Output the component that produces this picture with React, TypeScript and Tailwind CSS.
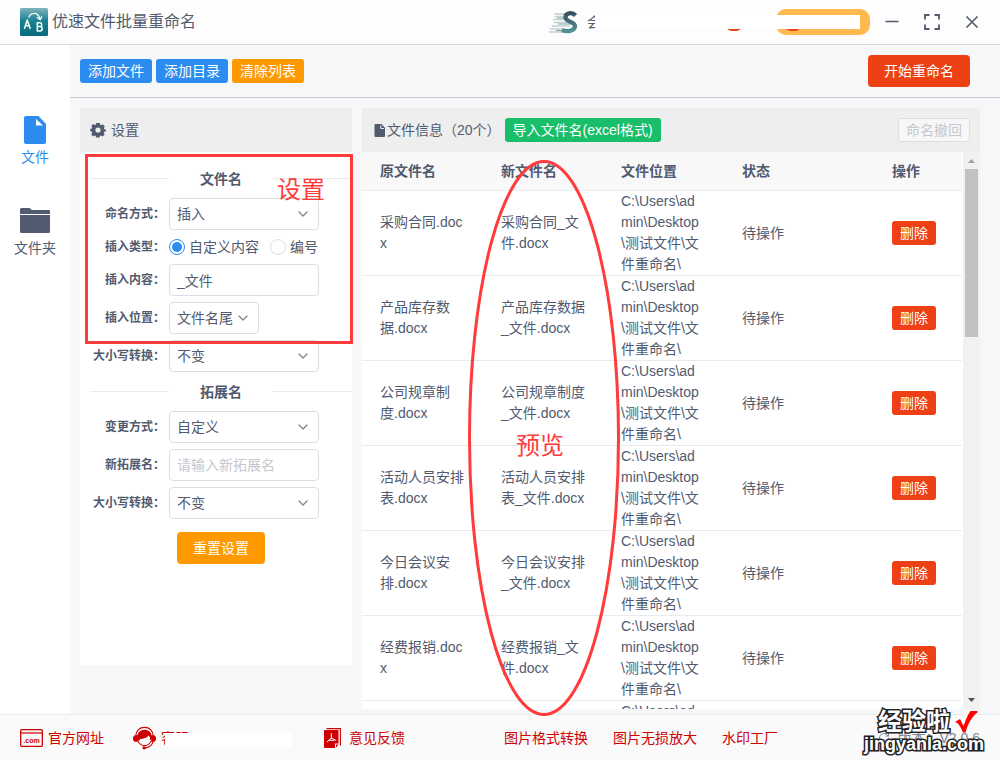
import { ReactNode } from 'react';
import { ChevronDown, RotateCw } from 'lucide-react';

const files = [
  { id: 1, name: '采购合同.docx', renamed: '采购合同_文件.docx', status: '待操作' },
  { id: 2, name: '产品库存数据.docx', renamed: '产品库存数据_文件.docx', status: '待操作' },
  { id: 3, name: '公司规章制度.docx', renamed: '公司规章制度_文件.docx', status: '待操作' },
  { id: 4, name: '活动人员安排表.docx', renamed: '活动人员安排表_文件.docx', status: '待操作' },
  { id: 5, name: '今日会议安排.docx', renamed: '今日会议安排_文件.docx', status: '待操作' },
  { id: 6, name: '经费报销.docx', renamed: '经费报销_文件.docx', status: '待操作' },
  { id: 7, name: '', renamed: '', status: '' },
];

const folder = 'C:\\Users\\admin\\Desktop\\测试文件\\文件重命名\\';

function AppLogo() {
  return (
    <svg className="h-7 w-7" viewBox="0 0 28 28" fill="none" stroke="#fff" strokeLinecap="round" strokeLinejoin="round">
      <defs>
        <linearGradient id="logo" x1="0" y1="0" x2="0" y2="1">
          <stop offset="0" stopColor="#7fb3bd" />
          <stop offset="0.45" stopColor="#1a8292" />
          <stop offset="1" stopColor="#086a7c" />
        </linearGradient>
      </defs>
      <rect width="28" height="28" rx="1.5" fill="url(#logo)" stroke="none" />
      <path d="M4.500 20.300 7.300 12l2.800 8.300M5.400 17.700h3.800" strokeWidth="1.500" />
      <path d="M17.300 14.700v8.300h2.700a2.200 2.200 0 0 0 0-4.400h-2.700M17.300 14.700h2.500a1.900 1.900 0 0 1 0 3.900" strokeWidth="1.500" />
      <path d="M9 9C10 6.500 11.800 5.300 14 5.300c3 0 5 2 5.800 5.200" strokeWidth="1.300" />
      <path d="M17.300 9.800 20.200 11.800 21.600 8.800" strokeWidth="1.300" />
    </svg>
  );
}

function SpeedLogo() {
  return (
    <svg className="h-6 w-[30px]" viewBox="0 0 30 24" fill="none">
      <defs>
        <linearGradient id="speed" x1="0" y1="0" x2="0" y2="1">
          <stop offset="0" stopColor="#35505f" />
          <stop offset="1" stopColor="#529398" />
        </linearGradient>
      </defs>
      <path d="M5 4h13M6 6.500h9M4 9.500h11M5 12.500h13M3 16h18M1 19h13M0 22h18" stroke="#c2cfd1" strokeWidth="1.400" />
      <path d="M8 8h7M9 14h12M7 20.500h9" stroke="#7fa5aa" strokeWidth="1" />
      <path d="M26.500 5.500C23.500 2 16.500 2.500 16.500 7.300 16.500 12.500 26.500 11.500 26 16.300 25.500 21.500 17.500 22 13 20" stroke="url(#speed)" strokeWidth="4.300" />
    </svg>
  );
}

function GearIcon() {
  return (
    <svg className="h-4 w-4" viewBox="0 0 16 16" fill="#515a6e">
      <path
        fillRule="evenodd"
        d="M6.200 1h3.600l.3 1.800 1.100.5 1.600-1 2 2.200-1 1.600.4 1 1.600.3v2l-1.600.4-.5 1.100 1 1.600-2.100 2-1.600-1-1.100.5-.3 1.500H6.200l-.4-1.600-1-.4-1.600 1-2-2.100 1-1.600-.5-1.100L.2 9V7l1.600-.4.4-1-1-1.600 2-2 1.600 1 1.100-.4zM8 5.400a2.600 2.600 0 1 0 0 5.200 2.600 2.600 0 0 0 0-5.200z"
      />
    </svg>
  );
}

function SectionTitle({ children }: { children: ReactNode }) {
  return (
    <div className="flex h-[27px] items-center">
      <span className="h-px flex-1 bg-[#e8eaec]" />
      <h3 className="px-[31px] text-sm font-bold">{children}</h3>
      <span className="h-px flex-1 bg-[#e8eaec]" />
    </div>
  );
}

function Field({ id, label, children }: { id: string; label: string; children: ReactNode }) {
  return (
    <div className="flex items-center">
      <label htmlFor={id} className="w-[79px] shrink-0 pr-1 text-right text-xs font-bold whitespace-nowrap">
        {label}：
      </label>
      {children}
    </div>
  );
}

function Select({ id, value, short = false }: { id: string; value: string; short?: boolean }) {
  return (
    <div className={`relative ${short ? 'w-[90px]' : 'w-[150px]'}`}>
      <select id={id} className="block h-8 w-full appearance-none rounded border border-[#dcdee2] bg-white pl-[7px] text-sm">
        <option>{value}</option>
      </select>
      <ChevronDown className="pointer-events-none absolute top-2 right-2 h-4 w-4 text-[#808695]" />
    </div>
  );
}

function Radio({ id, label, checked = false }: { id: string; label: string; checked?: boolean }) {
  return (
    <label className="flex items-center gap-1 text-sm whitespace-nowrap">
      <input
        id={id}
        type="radio"
        name="insertType"
        defaultChecked={checked}
        className="grid h-4 w-4 appearance-none place-items-center rounded-full border border-[#dcdee2] bg-white checked:border-[#2d8cf0] checked:before:h-[10px] checked:before:w-[10px] checked:before:rounded-full checked:before:bg-[#2d8cf0] checked:before:content-['']"
      />
      {label}
    </label>
  );
}

function Header() {
  return (
    <header className="flex h-[45px] shrink-0 items-center border-b border-[#dcdcdc] bg-[#fdfdfd] pr-[21px] pl-5">
      <AppLogo />
      <h1 className="ml-1 text-base">优速文件批量重命名</h1>
      <div className="ml-auto flex h-full items-center">
        <SpeedLogo />
        <div className="relative ml-2 flex h-full w-[283px] items-center">
          <span className="text-sm">会</span>
          <span className="mt-[2px] ml-auto h-4 w-4 rounded-md bg-[#ed4014]" />
          <button aria-label="会员" className="ml-[34px] flex h-[26px] w-[94px] items-center rounded-[10px] bg-[#ffb94f] pl-[9px]">
            <span className="mt-[2px] h-4 w-4 rounded-md bg-[#ed4014]" />
          </button>
          <span className="absolute top-[15px] right-[10px] left-2 h-[14px] bg-white" />
        </div>
        <div className="ml-[15px] flex items-center gap-[25px]">
          <button aria-label="最小化">
            <svg className="h-4 w-[14px]" viewBox="0 0 14 16" stroke="#515a6e" strokeWidth="1.500">
              <path d="M.5 7.500h13" />
            </svg>
          </button>
          <button aria-label="最大化">
            <svg className="h-4 w-4" viewBox="0 0 16 16" fill="none" stroke="#515a6e" strokeWidth="1.800">
              <path d="M1 5.500V1h4.500M10.500 1H15v4.500M15 10.500V15h-4.500M5.500 15H1v-4.500" />
            </svg>
          </button>
          <button aria-label="关闭">
            <svg className="h-4 w-[14px]" viewBox="0 0 14 16" stroke="#515a6e" strokeWidth="1.600">
              <path d="M1.500 2.500l11 11M12.500 2.500l-11 11" />
            </svg>
          </button>
        </div>
      </div>
    </header>
  );
}

function Sidebar() {
  return (
    <nav className="flex w-[70px] shrink-0 flex-col items-center gap-10 bg-white pt-[71px] text-sm">
      <a href="#files" className="flex flex-col items-center gap-[3px] text-[#2d8cf0]">
        <svg className="h-7 w-[22px]" viewBox="0 0 22 28">
          <path d="M2 0h12.500L22 8v18a2 2 0 0 1-2 2H2a2 2 0 0 1-2-2V2a2 2 0 0 1 2-2z" fill="#2d8cf0" />
          <path d="M12 3v6.500h7z" fill="#fff" />
        </svg>
        文件
      </a>
      <a href="#folders" className="flex flex-col items-center gap-[3px]">
        <svg className="h-7 w-[30px]" viewBox="0 0 30 28" fill="#515a6e">
          <path d="M0 7V2.500A1.500 1.500 0 0 1 1.500 1h8L12 3h17a1 1 0 0 1 1 1v3zM0 8h30v16.500a1.500 1.500 0 0 1-1.500 1.500h-27A1.500 1.500 0 0 1 0 24.500z" />
        </svg>
        文件夹
      </a>
    </nav>
  );
}

function SettingsPanel() {
  return (
    <section className="relative w-[272px] shrink-0 self-start bg-white">
      <h2 className="flex h-11 items-center gap-[5px] bg-[#eee] pl-[10px] text-sm">
        <GearIcon />
        设置
      </h2>
      <form className="flex flex-col gap-[6px] pt-[13px] pb-[101px] pl-[10px]">
        <SectionTitle>文件名</SectionTitle>
        <Field id="mode" label="命名方式">
          <Select id="mode" value="插入" />
        </Field>
        <Field id="custom" label="插入类型">
          <div className="flex h-[22px] items-center gap-[11px]">
            <Radio id="custom" label="自定义内容" checked />
            <Radio id="serial" label="编号" />
          </div>
        </Field>
        <Field id="content" label="插入内容">
          <input id="content" defaultValue="_文件" className="h-8 w-[150px] rounded border border-[#dcdee2] px-[7px] text-sm" />
        </Field>
        <Field id="position" label="插入位置">
          <Select id="position" value="文件名尾" short />
        </Field>
        <Field id="nameCase" label="大小写转换">
          <Select id="nameCase" value="不变" />
        </Field>
        <SectionTitle>拓展名</SectionTitle>
        <Field id="extMode" label="变更方式">
          <Select id="extMode" value="自定义" />
        </Field>
        <Field id="ext" label="新拓展名">
          <input
            id="ext"
            placeholder="请输入新拓展名"
            className="h-8 w-[150px] rounded border border-[#dcdee2] px-[7px] text-sm placeholder:text-[#c5c8ce]"
          />
        </Field>
        <Field id="extCase" label="大小写转换">
          <Select id="extCase" value="不变" />
        </Field>
        <button type="button" className="mt-[7px] h-8 self-center rounded bg-[#ff9900] px-4 text-sm text-white">
          重置设置
        </button>
      </form>

      {/* Callout around the file name settings */}
      <div className="pointer-events-none absolute top-[46px] -right-px left-[5px] h-[190px] border-3 border-[#ff3b3b]">
        <span className="absolute top-[17px] right-[25px] text-2xl text-[#ff3b3b]">设置</span>
      </div>
    </section>
  );
}

function FilesPanel() {
  return (
    <section className="relative flex min-w-0 flex-1 flex-col bg-white">
      <div className="flex h-11 shrink-0 items-center bg-[#eee] pr-[10px] pl-3 text-sm">
        <svg className="mr-px h-[13px] w-3" viewBox="0 0 12 13">
          <path d="M1.500 0h6L11 3.800V12a1 1 0 0 1-1 1H1.500a1 1 0 0 1-1-1V1a1 1 0 0 1 1-1z" fill="#515a6e" />
          <path d="M6.800 1.200v3.300h3.200" fill="none" stroke="#eee" strokeWidth="1" />
        </svg>
        <h2>文件信息（20个）</h2>
        <button className="ml-1 h-6 rounded-[3px] bg-[#19be6b] px-2 whitespace-nowrap text-white">导入文件名(excel格式)</button>
        <button disabled className="ml-auto h-6 rounded-[3px] border border-[#dcdee2] bg-[#f7f7f7] px-[7px] text-[#c5c8ce]">
          命名撤回
        </button>
      </div>
      <div className="flex min-h-0 flex-1">
        <div className="min-w-0 flex-1 overflow-hidden pr-px">
          <table className="w-full table-fixed border-separate border-spacing-0 text-left text-sm leading-[21px]">
            <colgroup>
              <col className="w-[121px]" />
              <col className="w-[120px]" />
              <col className="w-[121px]" />
              <col className="w-[150px]" />
              <col />
            </colgroup>
            <thead>
              <tr className="h-[39px] bg-[#f8f8f9]">
                {['原文件名', '新文件名', '文件位置', '状态', '操作'].map(title => (
                  <th key={title} className="border-b border-[#e8eaec] px-[18px] py-0 font-bold">
                    {title}
                  </th>
                ))}
              </tr>
            </thead>
            <tbody>
              {files.map(file => (
                <tr key={file.id}>
                  <td className="border-b border-[#e8eaec] px-[18px] py-0 break-all">{file.name}</td>
                  <td className="border-b border-[#e8eaec] px-[18px] py-0 break-all">{file.renamed}</td>
                  <td className="border-b border-[#e8eaec] px-[18px] py-0 break-all">{folder}</td>
                  <td className="border-b border-[#e8eaec] px-[18px] py-0">{file.status}</td>
                  <td className="border-b border-[#e8eaec] px-[18px] py-0">
                    {file.status && (
                      <button className="block h-6 rounded-[3px] bg-[#ed4014] px-2 leading-6 text-white">删除</button>
                    )}
                  </td>
                </tr>
              ))}
            </tbody>
          </table>
        </div>
        <div className="flex w-[17px] shrink-0 flex-col items-center bg-[#f1f1f1]">
          <svg className="h-[17px] w-[13px] shrink-0" viewBox="0 0 13 17">
            <path d="M3 11l3.500-4 3.500 4z" fill="#a3a3a3" />
          </svg>
          <div className="h-[168px] w-[13px] bg-[#c1c1c1]" />
          <svg className="mt-auto h-[17px] w-[13px] shrink-0" viewBox="0 0 13 17">
            <path d="M3 6l3.500 4L10 6z" fill="#505050" />
          </svg>
        </div>
      </div>

      {/* Callout around the new file name column */}
      <div className="pointer-events-none absolute top-[52px] left-[106px] z-10 flex h-[556px] w-[152px] items-center justify-center">
        <svg className="absolute inset-0 h-full w-full" viewBox="0 0 152 556" fill="none">
          <ellipse cx="76" cy="278" rx="74.500" ry="276.500" stroke="#ff3b3b" strokeWidth="3" />
        </svg>
        <span className="pt-4 pr-2 text-2xl text-[#ff3b3b]">预览</span>
      </div>
    </section>
  );
}

function Footer() {
  return (
    <footer className="relative flex h-[46px] shrink-0 items-center border-t border-[#ebebeb] bg-[#fafafa] px-5 text-sm text-[#cc0000]">
      <a href="#site" className="flex items-center gap-[5px]">
        <svg className="h-[18px] w-[23px]" viewBox="0 0 23 18" fill="none" stroke="#cc0000">
          <rect x=".7" y=".7" width="21.600" height="16.600" rx="1" strokeWidth="1.300" />
          <path d="M1 4h21" strokeWidth="1.200" />
          <text x="11.500" y="14" textAnchor="middle" fontSize="7" fontWeight="bold" fontFamily="Liberation Sans" fill="#cc0000" stroke="none">
            .com
          </text>
        </svg>
        官方网址
      </a>
      <a href="#service" className="relative ml-[29px] flex w-[159px] items-center gap-[5px]">
        <svg className="h-6 w-[23px]" viewBox="0 0 24 24" fill="none">
          <path d="M3 10C3 4 7 1 12 1s9 3 9 9" stroke="#cc0000" strokeWidth="1.300" />
          <path d="M4.500 14C3.500 7 7 3.500 12 3.500s8.500 3.500 7.500 10.500h-1.500c0-2-.8-3.500-1.500-4.500-2 2.500-5.500 3.500-9 3.500L6 15z" fill="#cc0000" />
          <path d="M5 9H3a3 3.500 0 0 0 0 7h2zM19 9h2a3 3.500 0 0 1 0 7h-2z" fill="#cc0000" />
          <path d="M5 15c1.500 3.300 4 5 7 5s5.500-1.700 7-5M21 15.500c-1 4-4.500 6.500-8.500 7" stroke="#cc0000" strokeWidth="1.200" />
          <circle cx="11.500" cy="22.300" r="1.700" fill="#cc0000" />
        </svg>
        客服
        <span className="absolute top-[7px] right-0 left-8 h-[14px] bg-white" />
      </a>
      <a href="#feedback" className="ml-8 flex items-center gap-2">
        <svg className="h-5 w-[17px]" viewBox="0 0 17 20" fill="none">
          <path d="M2.500.6h13.900v16.900" stroke="#cc0000" strokeWidth="1.100" />
          <path d="M1 2h13.500v13.500H11V20H1a1 1 0 0 1-1-1V3a1 1 0 0 1 1-1zM12 16.500h2.500L12 19.500z" fill="#cc0000" />
          <path d="M7.300 5.500v4.500M7.300 10l-4 3.800M7.300 10l4.500 2.300M4.500 12.300h5.500" stroke="#fff" strokeWidth="1" strokeLinecap="round" />
        </svg>
        意见反馈
      </a>
      <div className="ml-[99px] flex gap-[25px]">
        <a href="#convert">图片格式转换</a>
        <a href="#enlarge">图片无损放大</a>
        <a href="#watermark">水印工厂</a>
      </div>
      <div className="ml-auto flex items-center gap-2 whitespace-nowrap text-[#808695]">
        <RotateCw className="h-3 w-3" />
        <span>版本：V2.0.6</span>
      </div>

      {/* Site mark over the version number */}
      <div className="pointer-events-none absolute right-4 bottom-[6px] z-20 flex flex-col items-end font-bold text-white [paint-order:stroke_fill] [-webkit-text-stroke:3px_#222]">
        <div className="flex items-center gap-1 pr-[6px]">
          <span className="text-2xl leading-6">经验啦</span>
          <svg className="h-6 w-6" viewBox="0 0 24 24">
            <path d="M1 12l5-3 3.500 7C12 9 14 4 16.500 1h7v1.500C18 6 14 14 11.500 22.500H9C7 18 4.500 12.500 1 12z" fill="#f00" />
          </svg>
        </div>
        <span className="text-lg leading-5">jingyanla.com</span>
      </div>
    </footer>
  );
}

export default function App() {
  return (
    <div className="flex h-screen flex-col overflow-hidden bg-[#f5f7f9] font-['Liberation_Sans','Noto_Sans_CJK_SC',sans-serif] text-[#515a6e]">
      <Header />
      <div className="flex min-h-0 flex-1">
        <Sidebar />
        <main className="flex min-w-0 flex-1 flex-col">
          <div className="flex h-[53px] shrink-0 items-center gap-1 border-b border-[#c8cacd] pr-[30px] pl-[10px] text-sm text-white">
            <button className="h-6 rounded-[3px] bg-[#2d8cf0] px-2">添加文件</button>
            <button className="h-6 rounded-[3px] bg-[#2d8cf0] px-2">添加目录</button>
            <button className="h-6 rounded-[3px] bg-[#ff9900] px-2">清除列表</button>
            <button className="ml-auto h-8 rounded bg-[#ed4014] px-4">开始重命名</button>
          </div>
          <div className="flex min-h-0 flex-1 gap-[10px] pt-[10px] pr-5 pb-[5px] pl-[10px]">
            <SettingsPanel />
            <FilesPanel />
          </div>
        </main>
      </div>
      <Footer />
    </div>
  );
}
